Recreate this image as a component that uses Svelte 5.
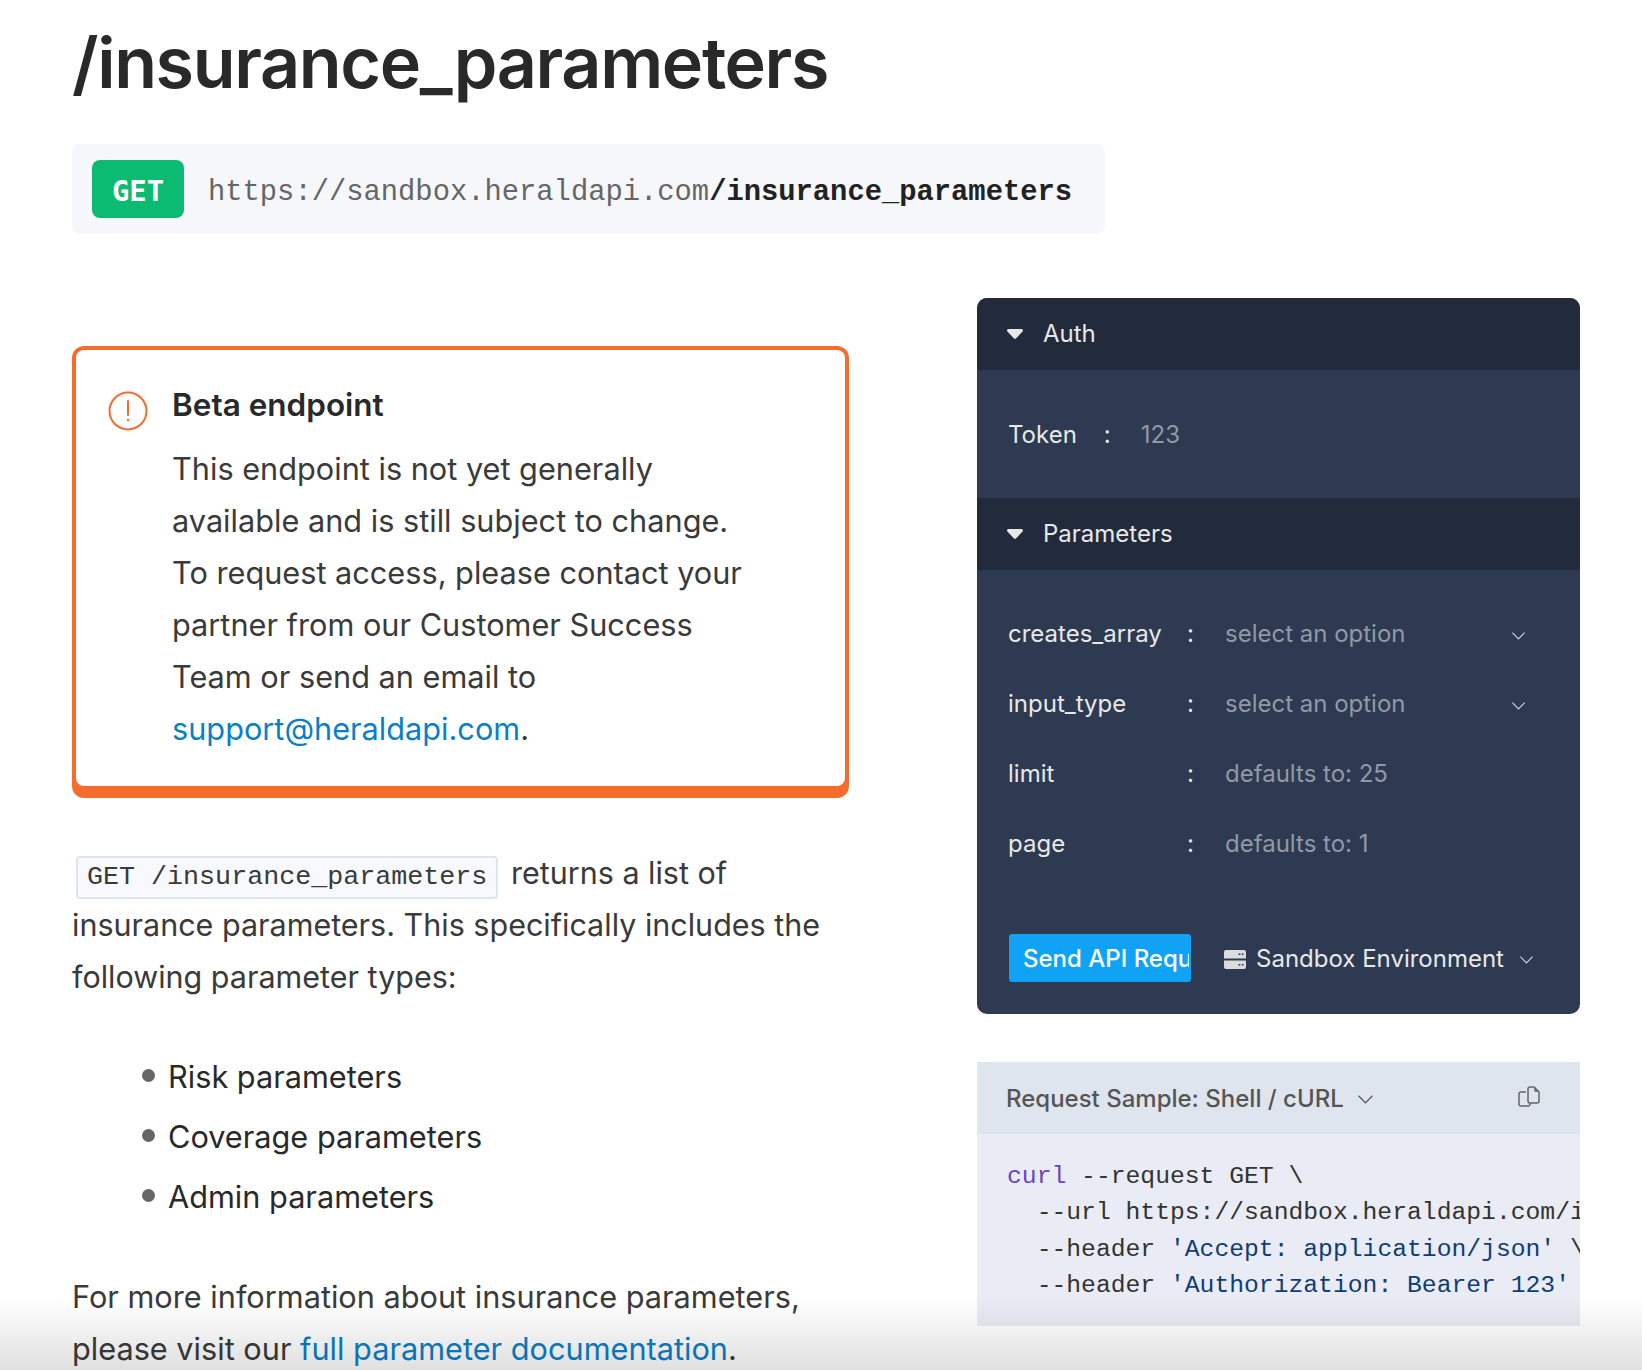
<script lang="ts">
	const params = [
		{ name: 'creates_array', value: 'select an option', select: true },
		{ name: 'input_type', value: 'select an option', select: true },
		{ name: 'limit', value: 'defaults to: 25', select: false },
		{ name: 'page', value: 'defaults to: 1', select: false }
	];
	const bullets = ['Risk parameters', 'Coverage parameters', 'Admin parameters'];
</script>

{#snippet chevron(cls)}
	<svg class={cls} viewBox="0 0 16 10" fill="none" stroke="currentColor" stroke-width="1.2" aria-hidden="true">
		<path d="M1.5 1.5 8 8.2l6.5-6.7" />
	</svg>
{/snippet}

{#snippet caret()}
	<svg class="caret" viewBox="0 0 16 10" aria-hidden="true">
		<path d="M1.6 0h12.8c1.3 0 2 1.4 1.2 2.4L9.2 9.3c-.6.7-1.8.7-2.4 0L.4 2.4C-.4 1.4.3 0 1.6 0z" fill="#e8e8e8" />
	</svg>
{/snippet}

<main class="page">
	<h1>/insurance_parameters</h1>
	<div class="url-bar">
		<span class="method">GET</span>
		<span class="url">https://sandbox.heraldapi.com<b>/insurance_parameters</b></span>
	</div>

	<div class="columns">
		<article class="doc">
			<aside class="callout">
				<div class="callout-inner">
					<svg class="callout-icon" viewBox="0 0 40 40" fill="none" stroke="#f46d2d" stroke-width="2" aria-hidden="true">
						<circle cx="20" cy="20" r="18.5" />
						<path d="M20 10v14" stroke-linecap="round" />
						<circle cx="20" cy="29" r="1.2" fill="#f46d2d" stroke="none" />
					</svg>
					<div class="callout-body">
						<h3>Beta endpoint</h3>
						<p>
							This endpoint is not yet generally available and is still subject to change. To request access,
							please contact your partner from our Customer Success Team or send an email to
							<a href="#support">support@heraldapi.com</a>.
						</p>
					</div>
				</div>
			</aside>

			<p class="intro">
				<code>GET /insurance_parameters</code> returns a list of insurance parameters. This specifically includes the following parameter types:
			</p>

			<ul>
				{#each bullets as item}
					<li>{item}</li>
				{/each}
			</ul>

			<p>
				For more information about insurance parameters, please visit our
				<a href="#docs">full parameter documentation</a>.
			</p>
		</article>

		<section class="side">
			<div class="panel">
				<div class="panel-head">{@render caret()}<span>Auth</span></div>
				<div class="token-row">
					<span>Token</span>
					<span class="colon">:</span>
					<span class="muted">123</span>
				</div>
				<div class="panel-head">{@render caret()}<span>Parameters</span></div>
				<div class="params">
					{#each params as p}
						<div class="param">
							<span class="param-name">{p.name}</span>
							<span class="param-colon">:</span>
							<span class="muted param-value">{p.value}</span>
							{#if p.select}{@render chevron('chev-param')}{/if}
						</div>
					{/each}
				</div>
				<div class="panel-foot">
					<button class="send"><span>Send API Request</span></button>
					<svg class="server" viewBox="0 0 22 19" aria-hidden="true">
						<path fill="#dcdcdc" fill-rule="evenodd" d="M2 0h18a2 2 0 0 1 2 2v6.500H0V2a2 2 0 0 1 2-2zm12.500 3.500v1.500h1.800V3.500zm3.200 0v1.500h1.800V3.500zM0 10.500h22V17a2 2 0 0 1-2 2H2a2 2 0 0 1-2-2zm14.500 3.500v1.500h1.800V14zm3.200 0v1.500h1.800V14z" />
					</svg>
					<span class="env">Sandbox Environment</span>
					{@render chevron('chev-env')}
				</div>
			</div>

			<div class="sample">
				<div class="sample-head">
					<span>Request Sample: Shell / cURL</span>
					{@render chevron('chev-sample')}
					<svg class="copy" viewBox="0 0 24 24" fill="none" stroke="#666" stroke-width="1.5" stroke-linejoin="round" aria-hidden="true">
						<path d="M9 7H4a2 2 0 0 0-2 2v10a2 2 0 0 0 2 2h7a2 2 0 0 0 2-2v-1" />
						<path d="M11 4a2 2 0 0 1 2-2h4l5 5v9a2 2 0 0 1-2 2h-7a2 2 0 0 1-2-2z" />
						<path d="M18 2.500V6h3.500" />
					</svg>
				</div>
				<pre class="code"><span class="kw">curl</span> --request GET \
  --url https://sandbox.heraldapi.com/insurance_parameters \
  --header <span class="str">'Accept: application/json'</span> \
  --header <span class="str">'Authorization: Bearer 123'</span></pre>
			</div>
		</section>
	</div>
</main>
<div class="fade"></div>

<style>
	:global(body) {
		margin: 0;
		background: #fff;
		overflow: hidden;
	}

	.page {
		height: 1370px;
		overflow: hidden;
		box-sizing: border-box;
		padding: 0 62px 0 72px;
		font-family: Inter, 'Noto Sans', sans-serif;
		color: #3a3a3a;
	}

	h1 {
		margin: 0;
		padding-top: 18px;
		font-size: 70px;
		line-height: 90px;
		font-weight: 600;
		letter-spacing: -1.35px;
		color: #292929;
	}

	.url-bar {
		display: flex;
		align-items: center;
		gap: 24px;
		width: 1033px;
		height: 90px;
		box-sizing: border-box;
		margin-top: 36px;
		padding-left: 20px;
		background: #f5f7fb;
		border-radius: 8px;
	}

	.method {
		width: 92px;
		height: 58px;
		padding-top: 3px;
		box-sizing: border-box;
		display: flex;
		align-items: center;
		justify-content: center;
		background: #0bbb72;
		border-radius: 8px;
		color: #fff;
		font: 700 28.8px 'DejaVu Sans Mono', monospace;
	}

	.url {
		margin-top: 6px;
		font: 28.8px 'Liberation Mono', monospace;
		color: #666;
		white-space: nowrap;
	}

	.url b {
		color: #222;
	}

	.columns {
		display: flex;
		align-items: flex-start;
		gap: 128px;
		margin-top: 64px;
	}

	.doc {
		width: 777px;
		flex: none;
		padding-top: 48px;
		font-size: 30.7px;
		line-height: 52px;
	}

	.doc p {
		margin: 0;
	}

	.doc a {
		color: #0a7fc9;
		text-decoration: none;
	}

	.callout {
		height: 452px;
		box-sizing: border-box;
		padding: 4px 4px 12px;
		background: #f46d2d;
		border-radius: 12px;
	}

	.callout-inner {
		display: flex;
		gap: 24px;
		height: 100%;
		box-sizing: border-box;
		padding: 35px 32px 0;
		background: #fff;
		border-radius: 8px;
	}

	.callout-icon {
		width: 40px;
		height: 40px;
		flex: none;
		margin-top: 6px;
	}

	.callout-body {
		width: 590px;
	}

	h3 {
		margin: 0 0 18px;
		font-size: 31.5px;
		line-height: 40px;
		font-weight: 600;
		color: #292929;
	}

	.doc .intro {
		margin-top: 49px;
		font-size: 30.5px;
	}

	code {
		display: inline-block;
		margin-left: 4px;
		margin-right: 4px;
		padding: 0 9px;
		font: 26.7px/39px 'Liberation Mono', monospace;
		background: #f7f9fc;
		border: 2px solid #dfe5ef;
		border-radius: 4px;
		color: #3a3a3a;
	}

	ul {
		margin: 44px 0;
		padding: 0 0 0 96px;
		list-style: none;
		color: #292929;
	}

	li {
		position: relative;
		height: 60px;
		line-height: 60px;
	}

	li::before {
		content: '';
		position: absolute;
		left: -26px;
		top: 22px;
		width: 13px;
		height: 13px;
		border-radius: 50%;
		background: #666;
	}

	.side {
		width: 603px;
		flex: none;
	}

	.panel {
		background: #2d3a51;
		border-radius: 10px;
		overflow: hidden;
		font-size: 24px;
		color: #e8e8e8;
	}

	.panel-head {
		display: flex;
		align-items: center;
		height: 72px;
		padding-left: 30px;
		gap: 20px;
		background: #212b3c;
	}

	.panel-head span {
		margin-top: -2px;
	}

	.caret {
		width: 16px;
		height: 10px;
	}

	.token-row {
		display: flex;
		align-items: center;
		height: 128px;
		padding-left: 31px;
	}

	.colon {
		margin: 0 30px 0 27px;
	}

	.muted {
		color: #9199a6;
	}

	.params {
		padding: 29px 0 27px;
	}

	.param {
		display: flex;
		align-items: center;
		height: 70px;
		box-sizing: border-box;
		padding: 0 0 1px 31px;
	}

	.param-name {
		width: 179px;
	}

	.param-colon {
		width: 38px;
	}

	.param-value {
		width: 286px;
	}

	.chev-param {
		width: 15px;
		height: 10px;
		margin-top: 5px;
		color: #cfd3da;
	}

	.panel-foot {
		display: flex;
		align-items: center;
		padding: 28px 0 32px 32px;
	}

	.send {
		width: 182px;
		height: 48px;
		padding: 0 2px 0 14px;
		border: none;
		border-radius: 3px;
		background: #10a3f5;
		color: #fff;
		font: 500 24px Inter, sans-serif;
		text-align: left;
		white-space: nowrap;
	}

	.send span {
		display: block;
		overflow: hidden;
	}

	.server {
		width: 22px;
		height: 19px;
		margin-left: 33px;
		margin-top: 2px;
	}

	.env {
		margin-left: 10px;
		color: #e8e8e8;
	}

	.chev-env {
		width: 15px;
		height: 10px;
		margin-left: 15px;
		margin-top: 4px;
		color: #cfd3da;
	}

	.sample {
		margin-top: 48px;
		background: #e9ecf4;
	}

	.sample-head {
		position: relative;
		display: flex;
		align-items: center;
		height: 72px;
		padding-left: 29px;
		background: #dfe5ef;
		color: #555;
		font-size: 24px;
		font-weight: 500;
	}

	.chev-sample {
		width: 17px;
		height: 11px;
		margin-left: 13px;
		margin-top: 3px;
		color: #555;
	}

	.copy {
		position: absolute;
		right: 39px;
		top: 23px;
		width: 24px;
		height: 24px;
	}

	.code {
		margin: 0;
		height: 192px;
		box-sizing: border-box;
		padding: 24px 0 0 30px;
		overflow: hidden;
		font: 24.7px/36.3px 'Liberation Mono', monospace;
		color: #333;
	}

	.kw {
		color: #6f42c1;
	}

	.str {
		color: #0f3d78;
	}

	.fade {
		position: fixed;
		left: 0;
		right: 0;
		bottom: 0;
		height: 72px;
		background: linear-gradient(to bottom, #fff, #e0e0e0);
		mix-blend-mode: multiply;
		pointer-events: none;
	}
</style>
